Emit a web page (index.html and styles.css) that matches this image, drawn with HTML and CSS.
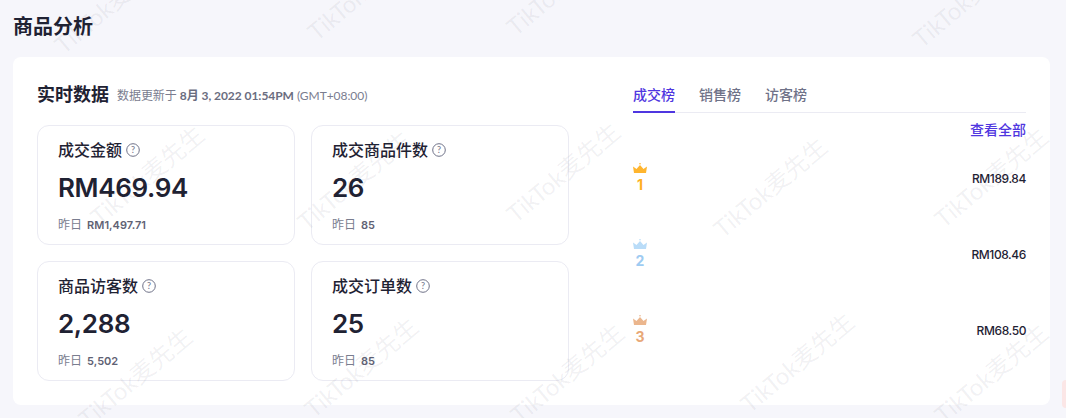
FILE: index.html
```html
<!DOCTYPE html>
<html lang="zh-CN">
<head>
    <meta charset="UTF-8">
    <meta name="viewport" content="width=device-width, initial-scale=1.0">
    <title>商品分析</title>
    <link rel="stylesheet" href="styles.css">
</head>
<body>
    <h1 class="page-title">商品分析</h1>
    <div class="panel">
        <section class="realtime">
            <div class="realtime-head">
                <h2>实时数据</h2>
                <span class="updated">数据更新于 <b>8月 3, 2022 01:54PM</b> (GMT+08:00)</span>
            </div>
            <div class="stats">
                <div class="stat">
                    <div class="stat-name">成交金额 <svg class="help" viewBox="0 0 14 14"><circle cx="7" cy="7" r="6.3"/><text x="7" y="10">?</text></svg></div>
                    <div class="stat-value">RM469.94</div>
                    <div class="stat-prev">昨日 <b>RM1,497.71</b></div>
                </div>
                <div class="stat">
                    <div class="stat-name">成交商品件数 <svg class="help" viewBox="0 0 14 14"><circle cx="7" cy="7" r="6.3"/><text x="7" y="10">?</text></svg></div>
                    <div class="stat-value">26</div>
                    <div class="stat-prev">昨日 <b>85</b></div>
                </div>
                <div class="stat">
                    <div class="stat-name">商品访客数 <svg class="help" viewBox="0 0 14 14"><circle cx="7" cy="7" r="6.3"/><text x="7" y="10">?</text></svg></div>
                    <div class="stat-value">2,288</div>
                    <div class="stat-prev">昨日 <b>5,502</b></div>
                </div>
                <div class="stat">
                    <div class="stat-name">成交订单数 <svg class="help" viewBox="0 0 14 14"><circle cx="7" cy="7" r="6.3"/><text x="7" y="10">?</text></svg></div>
                    <div class="stat-value">25</div>
                    <div class="stat-prev">昨日 <b>85</b></div>
                </div>
            </div>
        </section>
        <section class="ranking">
            <div class="tabs">
                <div class="tab active">成交榜</div>
                <div class="tab">销售榜</div>
                <div class="tab">访客榜</div>
            </div>
            <a class="view-all">查看全部</a>
            <div class="rank-row gold">
                <div class="medal">
                    <svg class="crown" viewBox="0 0 14 10"><path d="M0 3.500L3.500 6 7 2l3.500 4L14 3.500 13 10H1z"/><circle cx="7" cy=".8" r=".8"/></svg>
                    <span>1</span>
                </div>
                <div class="amount">RM189.84</div>
            </div>
            <div class="rank-row silver">
                <div class="medal">
                    <svg class="crown" viewBox="0 0 14 10"><path d="M0 3.500L3.500 6 7 2l3.500 4L14 3.500 13 10H1z"/><circle cx="7" cy=".8" r=".8"/></svg>
                    <span>2</span>
                </div>
                <div class="amount">RM108.46</div>
            </div>
            <div class="rank-row bronze">
                <div class="medal">
                    <svg class="crown" viewBox="0 0 14 10"><path d="M0 3.500L3.500 6 7 2l3.500 4L14 3.500 13 10H1z"/><circle cx="7" cy=".8" r=".8"/></svg>
                    <span>3</span>
                </div>
                <div class="amount">RM68.50</div>
            </div>
        </section>
    </div>
    <div class="side-tab"></div>
    <div class="watermarks" id="marks"></div>
    <script>
        // 水印起点（左下角），每个位置略有偏移
        const points = [
            [58, 48], [311, 35], [510, 30], [916, 42],
            [94, 220], [301, 225], [510, 217], [717, 232], [938, 222],
            [82, 422], [308, 412], [514, 418], [744, 407], [938, 418]
        ];
        const marks = document.getElementById('marks');
        points.forEach(p => {
            const m = document.createElement('span');
            m.className = 'mark';
            m.textContent = 'TikTok麦先生';
            m.style.left = p[0] + 'px';
            m.style.top = (p[1] - 16) + 'px';
            marks.appendChild(m);
        });
    </script>
</body>
</html>
```
FILE: styles.css
```css
* {
    box-sizing: border-box;
}
html, body {
    height: 418px;
    overflow: hidden;
}
body {
    margin: 0;
    padding: 0 16px 0 13px;
    background: #f6f6fb;
    color: #1f2233;
    font-family: Lato, 'Noto Sans CJK SC', sans-serif;
}
.page-title {
    margin: 0;
    height: 57px;
    padding-top: 11px;
    font-size: 20px;
    line-height: 30px;
    font-weight: 700;
}
.panel {
    display: flex;
    justify-content: space-between;
    height: 348px;
    width: 1037px;
    padding: 24px;
    background: #fff;
    border-radius: 8px;
}
.realtime {
    width: 532px;
}
.realtime-head {
    display: flex;
    align-items: center;
    height: 28px;
    margin-top: -1px;
    margin-bottom: 17px;
}
.realtime-head h2 {
    margin: 0 8px 0 0;
    font-size: 18px;
    line-height: 28px;
    font-weight: 700;
}
.updated {
    font-size: 12px;
    letter-spacing: -.05px;
    color: #7a7d8f;
}
.updated b {
    color: #6a6d80;
    font-weight: 700;
}
.stats {
    display: grid;
    grid-template-columns: 258px 258px;
    grid-auto-rows: 120px;
    gap: 16px;
}
.stat {
    padding: 11px 20px;
    border: 1px solid #ebebf3;
    border-radius: 12px;
}
.stat-name {
    display: flex;
    align-items: center;
    gap: 4px;
    height: 24px;
    font-size: 16px;
    font-weight: 500;
}
.help {
    width: 14px;
    height: 14px;
    margin-top: 1px;
    fill: none;
    stroke: #6f7288;
}
.help text {
    fill: #6f7288;
    stroke: none;
    font-size: 9px;
    text-anchor: middle;
}
.stat-value {
    margin-top: 8px;
    font-family: Inter, sans-serif;
    font-size: 26px;
    line-height: 38px;
    font-weight: 600;
    letter-spacing: -.35px;
}
.stat-prev {
    margin-top: 8px;
    font-size: 12px;
    line-height: 20px;
    color: #7a7d8f;
}
.stat-prev b {
    margin-left: 2px;
    font-family: Inter, sans-serif;
    font-size: 11px;
    color: #5f6274;
    font-weight: 600;
}
.ranking {
    width: 393px;
}
.tabs {
    display: flex;
    gap: 24px;
    height: 32px;
    border-bottom: 1px solid #ebebf3;
}
.tab {
    height: 32px;
    padding-top: 3px;
    font-size: 14px;
    line-height: 22px;
    font-weight: 500;
    color: #6f7288;
}
.tab.active {
    color: #4f36e0;
    border-bottom: 2px solid #4f36e0;
}
.view-all {
    display: block;
    margin-top: 7px;
    text-align: right;
    font-size: 14px;
    line-height: 20px;
    font-weight: 500;
    color: #4f36e0;
}
.rank-row {
    display: flex;
    align-items: center;
    justify-content: space-between;
    height: 76px;
}
.medal {
    display: flex;
    flex-direction: column;
    align-items: center;
    gap: 5px;
    width: 14px;
    margin-bottom: 1px;
    font-family: Inter, sans-serif;
    font-size: 14px;
    line-height: 14px;
    font-weight: 700;
}
.crown {
    width: 14px;
    height: 10px;
}
.gold { color: #ffb020; }
.gold .crown { fill: #ffb52e; }
.silver { color: #9ecbf2; }
.silver .crown { fill: #b9dcf8; }
.bronze { color: #e8a877; }
.bronze .crown { fill: #ebb68d; }
.amount {
    font-family: Inter, sans-serif;
    font-size: 12px;
    font-weight: 500;
    letter-spacing: -.4px;
    color: #1f2233;
}
.side-tab {
    position: absolute;
    right: -4px;
    top: 380px;
    width: 8px;
    height: 28px;
    background: #fbe6e6;
    border-radius: 4px;
}
.watermarks {
    position: absolute;
    left: 0;
    top: 0;
    width: 1066px;
    height: 418px;
    overflow: hidden;
    pointer-events: none;
}
.mark {
    position: absolute;
    transform-origin: 0 50%;
    transform: rotate(-40deg);
    font-size: 24px;
    line-height: 32px;
    white-space: nowrap;
    color: rgba(60, 60, 80, .07);
}
```
